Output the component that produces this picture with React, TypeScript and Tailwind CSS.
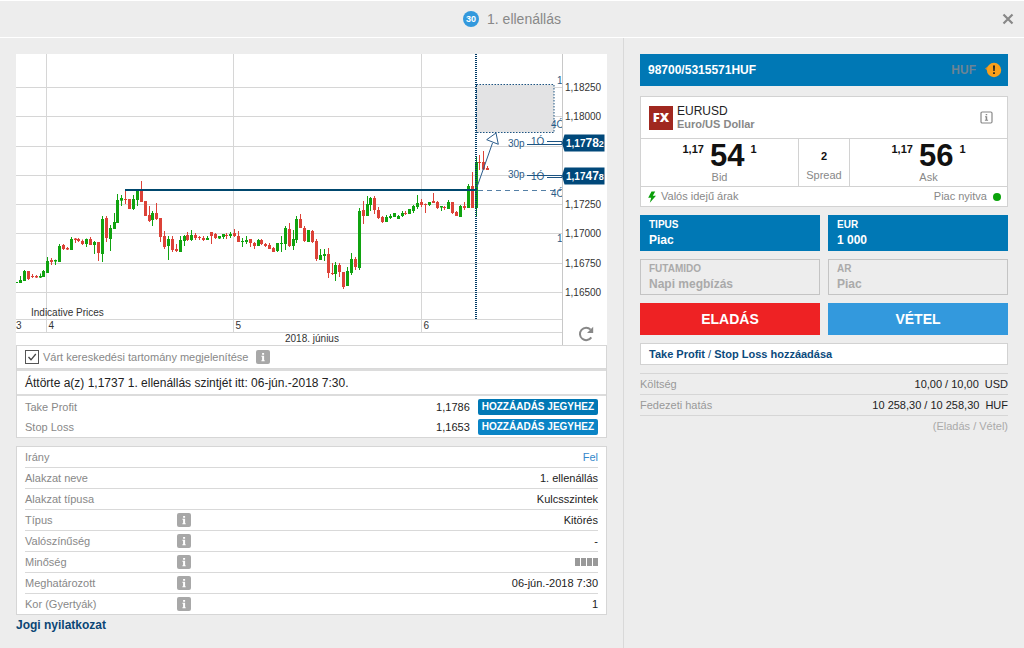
import { useState } from "react";
import type { ReactNode } from "react";

// [high, body top, body bottom, low, 1 = rising / 0 = falling]
type Candle = [number, number, number, number, 0 | 1];

const candles: Candle[] = [
  [282, 282, 283, 283, 1], [276, 280, 283, 283, 1], [270, 271, 281, 281, 1], [271, 271, 279, 280, 0],
  [274, 276, 277, 278, 0], [275, 276, 277.5, 278, 0], [273.5, 276, 277.6, 278, 1], [270, 271, 277, 277, 1],
  [257, 261, 273, 273, 1], [258, 260, 262, 265, 0], [259.6, 260, 261.5, 265, 1], [244, 246, 262, 262, 1],
  [244, 245, 249, 250, 0], [247, 248, 249.5, 250, 0], [237, 239, 250, 250, 1], [238, 238.5, 240, 243, 0],
  [238, 239, 241, 242, 0], [239.5, 241, 244, 245, 0], [238.5, 239, 244, 247, 1], [237, 239, 245, 245, 0],
  [241, 242, 245, 254, 1], [242, 242, 253, 261, 0], [216, 219, 254, 262, 1], [216, 218, 238, 242, 0],
  [225, 228, 239, 251, 1], [213, 222, 229, 229, 1], [194, 200, 223, 223, 1], [195, 198, 200.7, 206, 1],
  [189.5, 199, 200, 204, 0], [199, 199, 209, 209, 0], [195, 199, 209, 210, 1], [190, 191, 200, 206, 1],
  [181, 191, 202, 202, 0], [201, 201, 216, 216, 0], [206, 215, 221, 222, 0], [211, 213, 220, 226, 1],
  [203, 213, 219, 220, 0], [218, 218, 237, 242, 0], [231, 236, 247, 249, 0], [236, 239, 246, 260, 1],
  [236, 239, 250, 252, 0], [244, 249, 251, 252, 0], [236, 240, 252, 252, 1], [235, 236, 241, 246, 1],
  [232, 235, 240, 241, 0], [230, 235, 240, 241, 1], [233, 235, 238, 240, 0], [236, 237, 238, 240, 0],
  [236, 238, 240, 241, 0], [236, 238, 240, 240, 1], [232, 232, 236, 244, 0], [233, 234, 238, 239, 0],
  [236, 236, 238.5, 239, 1], [234, 234, 237, 239, 1], [233, 235, 236, 239, 0], [232, 234, 236, 238, 1],
  [229, 233, 236, 237, 0], [231, 236, 242, 242, 0], [238, 241, 242, 247, 1], [236, 240, 242, 244, 1],
  [239, 239, 243, 247, 0], [242, 243, 246, 249, 0], [239, 240, 246, 246, 1], [239, 240, 244, 245, 0],
  [243, 244, 246, 247, 0], [243, 245, 249, 249, 0], [247, 248, 252, 252, 0], [243, 243, 251, 252, 1],
  [236, 243, 244, 252, 1], [226, 228, 244, 250, 1], [223, 229, 246, 247, 0], [230, 239, 246, 250, 1],
  [216, 219, 240, 243, 1], [214, 219, 228, 228, 0], [226, 228, 241, 242, 0], [230, 230, 242, 242, 1],
  [230, 231, 242, 243, 0], [239, 241, 259, 261, 0], [249, 255, 260, 260, 1], [249, 254, 256, 261, 1],
  [248, 254, 273, 278, 0], [263, 273, 274, 275, 0], [262, 265, 274, 281, 1], [263, 265, 272, 277, 0],
  [272, 272, 287, 289, 0], [267, 271, 286, 286, 1], [253, 259, 273, 275, 1], [257, 259, 267, 270, 0],
  [208, 211, 268, 270, 1], [201, 210, 216, 224, 0], [196, 204, 216, 216, 1], [197, 198, 205, 211, 1],
  [196, 198, 210, 214, 0], [207, 210, 218, 219, 0], [216, 217, 222, 223, 0], [215, 217, 222, 222, 1],
  [214, 216, 218, 219, 1], [213, 213, 217, 217, 1], [215, 216, 219, 219, 1], [211, 213, 216, 217, 1],
  [211, 213, 214, 215, 0], [209, 209, 214, 214, 1], [205, 206, 211, 213, 1], [195, 203, 207, 209, 1],
  [199, 202, 205, 207, 0], [203.5, 204, 205, 213, 0], [202, 202, 205, 206, 1], [193, 201, 203, 203, 0],
  [201, 202, 208, 209, 0], [206, 206, 207.5, 211, 1], [206, 207, 208, 210, 0], [200, 202, 209, 209, 1],
  [202, 202, 213, 214, 0], [211, 212, 216, 216, 0], [205, 206, 217, 217, 1], [202, 206, 208, 210, 0],
  [184, 186, 208, 208, 1], [172, 186, 208, 208, 0], [156, 162, 208, 216, 1], [155, 162, 163, 170, 0],
  [151, 162, 169.5, 170, 0], [166, 168, 170, 170, 0],
];

const CANDLE_STEP = 3.893;
const FIRST_CANDLE_X = 16.2;

const priceLevels = [
  { y: 87, label: "1,18250" },
  { y: 116, label: "1,18000" },
  { y: 146, label: "" },
  { y: 175, label: "" },
  { y: 204, label: "1,17250" },
  { y: 233, label: "1,17000" },
  { y: 263, label: "1,16750" },
  { y: 292, label: "1,16500" },
];

const days = [
  { x: 46.5, label: "4" },
  { x: 233.5, label: "5" },
  { x: 421.5, label: "6" },
];

const details: { label: string; info?: boolean; value: ReactNode }[] = [
  { label: "Irány", value: <span className="text-[#3388cc]">Fel</span> },
  { label: "Alakzat neve", value: "1. ellenállás" },
  { label: "Alakzat típusa", value: "Kulcsszintek" },
  { label: "Típus", info: true, value: "Kitörés" },
  { label: "Valószínűség", info: true, value: "-" },
  { label: "Minőség", info: true, value: <QualityBars /> },
  { label: "Meghatározott", info: true, value: "06-jún.-2018 7:30" },
  { label: "Kor (Gyertyák)", info: true, value: "1" },
];

function QualityBars() {
  return (
    <span className="flex justify-end gap-px">
      {[0, 1, 2, 3].map((i) => (
        <span key={i} className="h-2 w-[5px] bg-[#999]" />
      ))}
    </span>
  );
}

function InfoButton({ label }: { label: string }) {
  return (
    <button type="button" aria-label={label} className="block h-3.5 w-3.5 shrink-0 rounded-xs bg-[#a8a8a8]">
      <svg viewBox="0 0 14 14" className="h-3.5 w-3.5">
        <path d="M6.1 3h2v1.7h-2zM5.4 5.8h2.7v4.4h.6v1H5.4v-1h.7V6.8h-.7z" fill="#fff" />
      </svg>
    </button>
  );
}

function PriceTag({ y, head, big, tail }: { y: number; head: string; big: string; tail: string }) {
  return (
    <g>
      <path d={`M562 ${y + 8.5}L564.5 ${y}H604.5V${y + 17}H564.5Z`} fill="#00487a" />
      <text x="566" y={y + 12.5} fill="#fff" fontWeight="bold" fontSize="10">
        {head}
        <tspan fontSize="12">{big}</tspan>
        <tspan fontSize="9">{tail}</tspan>
      </text>
    </g>
  );
}

function PriceChart() {
  return (
    <svg viewBox="16 54 591 291" className="block h-auto w-full bg-white font-['Liberation_Sans',Arial,sans-serif]">
      <g stroke="#d6d6d6" strokeWidth="1">
        {priceLevels.map((p) => (
          <path key={p.y} d={`M16 ${p.y + 0.5}H562`} />
        ))}
        <path d="M16 319.5H562M16 332.5H562" />
        {days.map((d) => (
          <path key={d.label} d={`M${d.x} 54V332`} />
        ))}
      </g>

      <rect x="476.5" y="84.5" width="77.5" height="48" fill="#e3e3e4" stroke="#1d5482" strokeDasharray="1.5 1.5" />

      {candles.map(([high, top, bottom, low, up], i) => {
        const x = Math.round(FIRST_CANDLE_X + i * CANDLE_STEP);
        const color = up ? "#10a310" : "#dc4238";
        return (
          <g key={i} fill={color}>
            <rect x={x} y={high} width="1" height={low - high} />
            <rect x={x - 1} y={top} width="3" height={Math.max(bottom - top, 1)} />
          </g>
        );
      })}

      <path d="M476 54V319" stroke="#003a66" strokeWidth="2" strokeDasharray="1 1" />
      <path d="M125 190H477" stroke="#00486e" strokeWidth="2" />
      <path d="M478 190.5H561" stroke="#5580a6" strokeDasharray="5 4" />
      <path d="M477 187L492.5 143" stroke="#2a5c8c" fill="none" />
      <path d="M496 133L486.7 139.7L498.3 144.3Z" stroke="#2a5c8c" fill="#fff" />

      <g fill="#2c5b86" fontSize="10">
        <text x="508" y="147">30p</text>
        <text x="531" y="145">1Ó</text>
        <text x="508" y="178">30p</text>
        <text x="531" y="180">1Ó</text>
        <text x="551" y="128">4Ó</text>
        <text x="551" y="197">4Ó</text>
        <text x="557" y="84">1</text>
        <text x="557" y="242">1</text>
      </g>
      <path
        d="M527 144.5H563M547 141.5H562V144M527 175.5H562V177M547 177.5H563"
        stroke="#1d5482"
        fill="none"
      />

      <rect x="562" y="54" width="45" height="291" fill="#fff" />
      <path d="M562.5 54V345" stroke="#c8c8c8" />
      <g fill="#333" fontSize="10">
        {priceLevels.map((p) => (
          <text key={p.y} x="565" y={p.y + 4}>{p.label}</text>
        ))}
        <text x="31" y="316">Indicative Prices</text>
        <text x="16" y="329">3</text>
        {days.map((d) => (
          <text key={d.label} x={d.x + 2} y="329">{d.label}</text>
        ))}
        <text x="285" y="342">2018. június</text>
      </g>
      <PriceTag y={134.5} head="1,17" big="78" tail="2" />
      <PriceTag y={167.5} head="1,17" big="47" tail="8" />
    </svg>
  );
}

function RangePanel() {
  const [showRange, setShowRange] = useState(true);

  return (
    <section className="border border-[#d6d6d6] bg-white text-[11px] text-[#888]">
      <div className="flex h-[23px] items-center border-b border-[#d9d9d9] px-2">
        <label className="flex items-center gap-1">
          <span className="relative block h-3.5 w-3.5">
            <input
              type="checkbox"
              checked={showRange}
              onChange={(e) => setShowRange(e.target.checked)}
              className="peer block h-3.5 w-3.5 appearance-none border border-[#555] bg-white"
            />
            <svg viewBox="0 0 14 14" className="pointer-events-none absolute inset-0 hidden peer-checked:block">
              <path d="M3.5 7L6 9.8L10.8 4" fill="none" stroke="#444" strokeWidth="1.3" />
            </svg>
          </span>
          Várt kereskedési tartomány megjelenítése
        </label>
        <span className="ml-2">
          <InfoButton label="Információ a tartományról" />
        </span>
      </div>
      <p className="flex h-[27px] items-center border-y-2 border-[#dcdcdc] px-2 text-[12px] text-[#222]">
        Áttörte a(z) 1,1737 1. ellenállás szintjét itt: 06-jún.-2018 7:30.
      </p>
      <div className="pt-px">
        <OrderLevel label="Take Profit" value="1,1786" active />
        <OrderLevel label="Stop Loss" value="1,1653" />
      </div>
    </section>
  );
}

function OrderLevel({ label, value, active }: { label: string; value: string; active?: boolean }) {
  return (
    <div className="flex h-5 items-center px-2">
      <span className="flex-1">{label}</span>
      <span className="mr-2 text-[#222]">{value}</span>
      <button
        type="button"
        className={`h-4 rounded-xs px-1 text-[10px] font-bold leading-4 text-white ${
          active ? "bg-[#0078b5]" : "bg-[#0a84c6]"
        }`}
      >
        HOZZÁADÁS JEGYHEZ
      </button>
    </div>
  );
}

function DetailsPanel() {
  return (
    <section className="mt-2 border border-[#d6d6d6] bg-white px-2">
      <table className="w-full border-separate border-spacing-0 text-[11px] leading-5">
        <tbody>
          {details.map((row) => (
            <tr
              key={row.label}
              className="*:h-[21px] *:border-b *:border-[#d9d9d9] *:p-0 *:align-middle last:*:h-5 last:*:border-b-0"
            >
              <th scope="row" className="w-[152px] text-left font-normal text-[#888]">{row.label}</th>
              <td>{row.info && <InfoButton label={row.label} />}</td>
              <td className="text-right text-[#222]">{row.value}</td>
            </tr>
          ))}
        </tbody>
      </table>
    </section>
  );
}

function Quote({ label, head, big, tail }: { label: string; head: string; big: string; tail: string }) {
  return (
    <div className="flex flex-1 flex-col items-center">
      <div className="flex items-start gap-1.5 text-[11px] font-bold leading-3 text-[#111]">
        <span className="pt-1">{head}</span>
        <span className="pt-0.5 text-[31px] leading-[30px]">{big}</span>
        <span className="pt-1">{tail}</span>
      </div>
      <span className="leading-3">{label}</span>
    </div>
  );
}

function InstrumentCard() {
  return (
    <section className="mt-2.5 border border-[#d2d2d2] bg-white text-[11px] text-[#888]">
      <div className="flex h-[41px] items-center pl-2 pr-3.5">
        <span className="flex h-6 w-6 items-center justify-center bg-[#a02820] font-['Open_Sans','Liberation_Sans',sans-serif] text-[13px] font-extrabold text-white">
          FX
        </span>
        <div className="ml-1 flex-1 leading-[13px]">
          <p className="text-[12px] text-[#222]">EURUSD</p>
          <p className="font-bold">Euro/US Dollar</p>
        </div>
        <button type="button" aria-label="EURUSD adatai">
          <svg viewBox="0 0 13 13" className="h-[13px] w-[13px]">
            <rect x="1" y="1" width="11" height="11" rx="1.2" fill="none" stroke="#888" strokeWidth="1.2" />
            <path d="M5.7 3h1.5v1.3H5.7zM5 5.3h2.2v3.5h.9v.9H4.9v-.9h.8V6.2H5z" fill="#888" />
          </svg>
        </button>
      </div>
      <div className="flex h-[49px] border-y border-[#d2d2d2]">
        <Quote label="Bid" head="1,17" big="54" tail="1" />
        <div className="flex w-[52px] flex-col items-center border-x border-[#d2d2d2] pt-2">
          <span className="font-bold leading-[19px] text-[#111]">2</span>
          <span className="leading-[19px]">Spread</span>
        </div>
        <Quote label="Ask" head="1,17" big="56" tail="1" />
      </div>
      <div className="flex h-[19px] items-center pl-1.5 pr-1.5">
        <svg viewBox="0 0 10 12" className="mr-1 h-3 w-2.5">
          <path d="M4.5 0.5L1.2 6.8H4.2L2.8 11.7L9 4.7H5.8L8.2 0.5Z" fill="#0a9f0a" />
        </svg>
        <span className="flex-1">Valós idejű árak</span>
        <span>Piac nyitva</span>
        <span className="ml-1.5 h-2 w-2 rounded-full bg-[#0aa30a]" />
      </div>
    </section>
  );
}

const fieldBox = "flex h-9 min-w-0 flex-col justify-center border px-2 pb-px font-bold";
const fieldActive = "border-[#0078b5] bg-[#0078b5] text-white";
const fieldDisabled = "border-[#c4c4c4] text-[#aaa]";
const fieldControl = "block w-full appearance-none bg-transparent p-0 text-[12px] font-bold leading-4 opacity-100";

function SelectField({ label, value, disabled }: { label: string; value: string; disabled?: boolean }) {
  return (
    <label className={`${fieldBox} ${disabled ? fieldDisabled : fieldActive}`}>
      <span className="text-[10px] leading-[14px]">{label}</span>
      <select className={fieldControl} defaultValue={value} disabled={disabled}>
        <option>{value}</option>
      </select>
    </label>
  );
}

function TextField({ label, value, disabled }: { label: string; value: string; disabled?: boolean }) {
  return (
    <label className={`${fieldBox} ${disabled ? fieldDisabled : fieldActive}`}>
      <span className="text-[10px] leading-[14px]">{label}</span>
      <input type="text" className={fieldControl} defaultValue={value} disabled={disabled} />
    </label>
  );
}

function CostRow({ label, value, currency }: { label: string; value: string; currency: string }) {
  return (
    <div className="flex h-[21px] items-center border-b border-[#d6d6d6]">
      <dt className="flex-1">{label}</dt>
      <dd className="text-[#222]">{value}</dd>
      <dd className="ml-1.5 text-[#222]">{currency}</dd>
    </div>
  );
}

function OrderTicket() {
  return (
    <aside className="w-[400px] shrink-0 px-4 pt-4">
      <div className="flex h-8 items-center bg-[#0078b5] px-2 text-[12px] font-bold text-white">
        <span className="flex-1">98700/5315571HUF</span>
        <span className="mr-2 text-[#6c8494]">HUF</span>
        <svg viewBox="0 0 18 16" className="-mr-0.5 h-4 w-[18px]">
          <path d="M1 6.5L5 3.5V10Z" fill="#c98a30" />
          <circle cx="10" cy="8" r="7.2" fill="#f9a01b" />
          <path d="M9 3.5H11L10.7 9H9.3ZM9.1 10.2H10.9V12H9.1Z" fill="#222" />
        </svg>
      </div>

      <InstrumentCard />

      <form className="mt-2 grid grid-cols-2 gap-2" onSubmit={(e) => e.preventDefault()}>
        <SelectField label="TIPUS" value="Piac" />
        <TextField label="EUR" value="1 000" />
        <SelectField label="FUTAMIDO" value="Napi megbízás" disabled />
        <TextField label="AR" value="Piac" disabled />
        <button type="submit" className="h-8 bg-[#ee2224] text-[14px] font-bold text-white">ELADÁS</button>
        <button type="submit" className="h-8 bg-[#3399dd] text-[14px] font-bold text-white">VÉTEL</button>
      </form>

      <button
        type="button"
        className="mt-2 block h-[22px] w-full border border-[#d2d2d2] bg-white px-2 text-left text-[11px] font-bold text-[#0b4a7c]"
      >
        Take Profit <span className="font-normal">/</span> Stop Loss hozzáadása
      </button>

      <dl className="mt-2 border-t border-[#d6d6d6] text-[11px] text-[#999]">
        <CostRow label="Költség" value="10,00 / 10,00" currency="USD" />
        <CostRow label="Fedezeti hatás" value="10 258,30 / 10 258,30" currency="HUF" />
      </dl>
      <p className="text-right text-[11px] leading-5 text-[#aaa]">(Eladás / Vétel)</p>
    </aside>
  );
}

export default function App() {
  return (
    <div className="flex min-h-screen flex-col bg-[#ededed] font-['Liberation_Sans',Arial,sans-serif]">
      <header className="relative flex h-[38px] items-center justify-center border-y border-white text-[#888]">
        <span className="flex h-4 w-4 items-center justify-center rounded-full bg-[#3399dd] text-[9px] font-bold leading-4 text-white">
          30
        </span>
        <h1 className="ml-2 text-[14px]">1. ellenállás</h1>
        <button type="button" aria-label="Bezárás" className="absolute right-2.5 top-3">
          <svg viewBox="0 0 12 12" className="h-3 w-3">
            <path d="M1.5 1.5L10.5 10.5M10.5 1.5L1.5 10.5" stroke="#888" strokeWidth="2.2" />
          </svg>
        </button>
      </header>

      <div className="flex flex-1">
        <main className="min-w-0 flex-1 border-r border-[#d9d9d9] pl-4 pr-4 pt-4">
          <div className="relative">
            <PriceChart />
            <button type="button" aria-label="Frissítés" className="absolute bottom-0.5 right-3">
              <svg viewBox="0 0 18 18" className="h-[18px] w-[18px]">
                <path d="M14.3 12.4A6.2 6.2 0 1 1 13.6 4.6" fill="none" stroke="#888" strokeWidth="2" />
                <path d="M16.2 1.8V8H10Z" fill="#888" />
              </svg>
            </button>
          </div>
          <RangePanel />
          <DetailsPanel />
          <a href="#disclaimer" className="block text-[12px] font-bold leading-5 text-[#0b4675]">
            Jogi nyilatkozat
          </a>
        </main>
        <OrderTicket />
      </div>
    </div>
  );
}
